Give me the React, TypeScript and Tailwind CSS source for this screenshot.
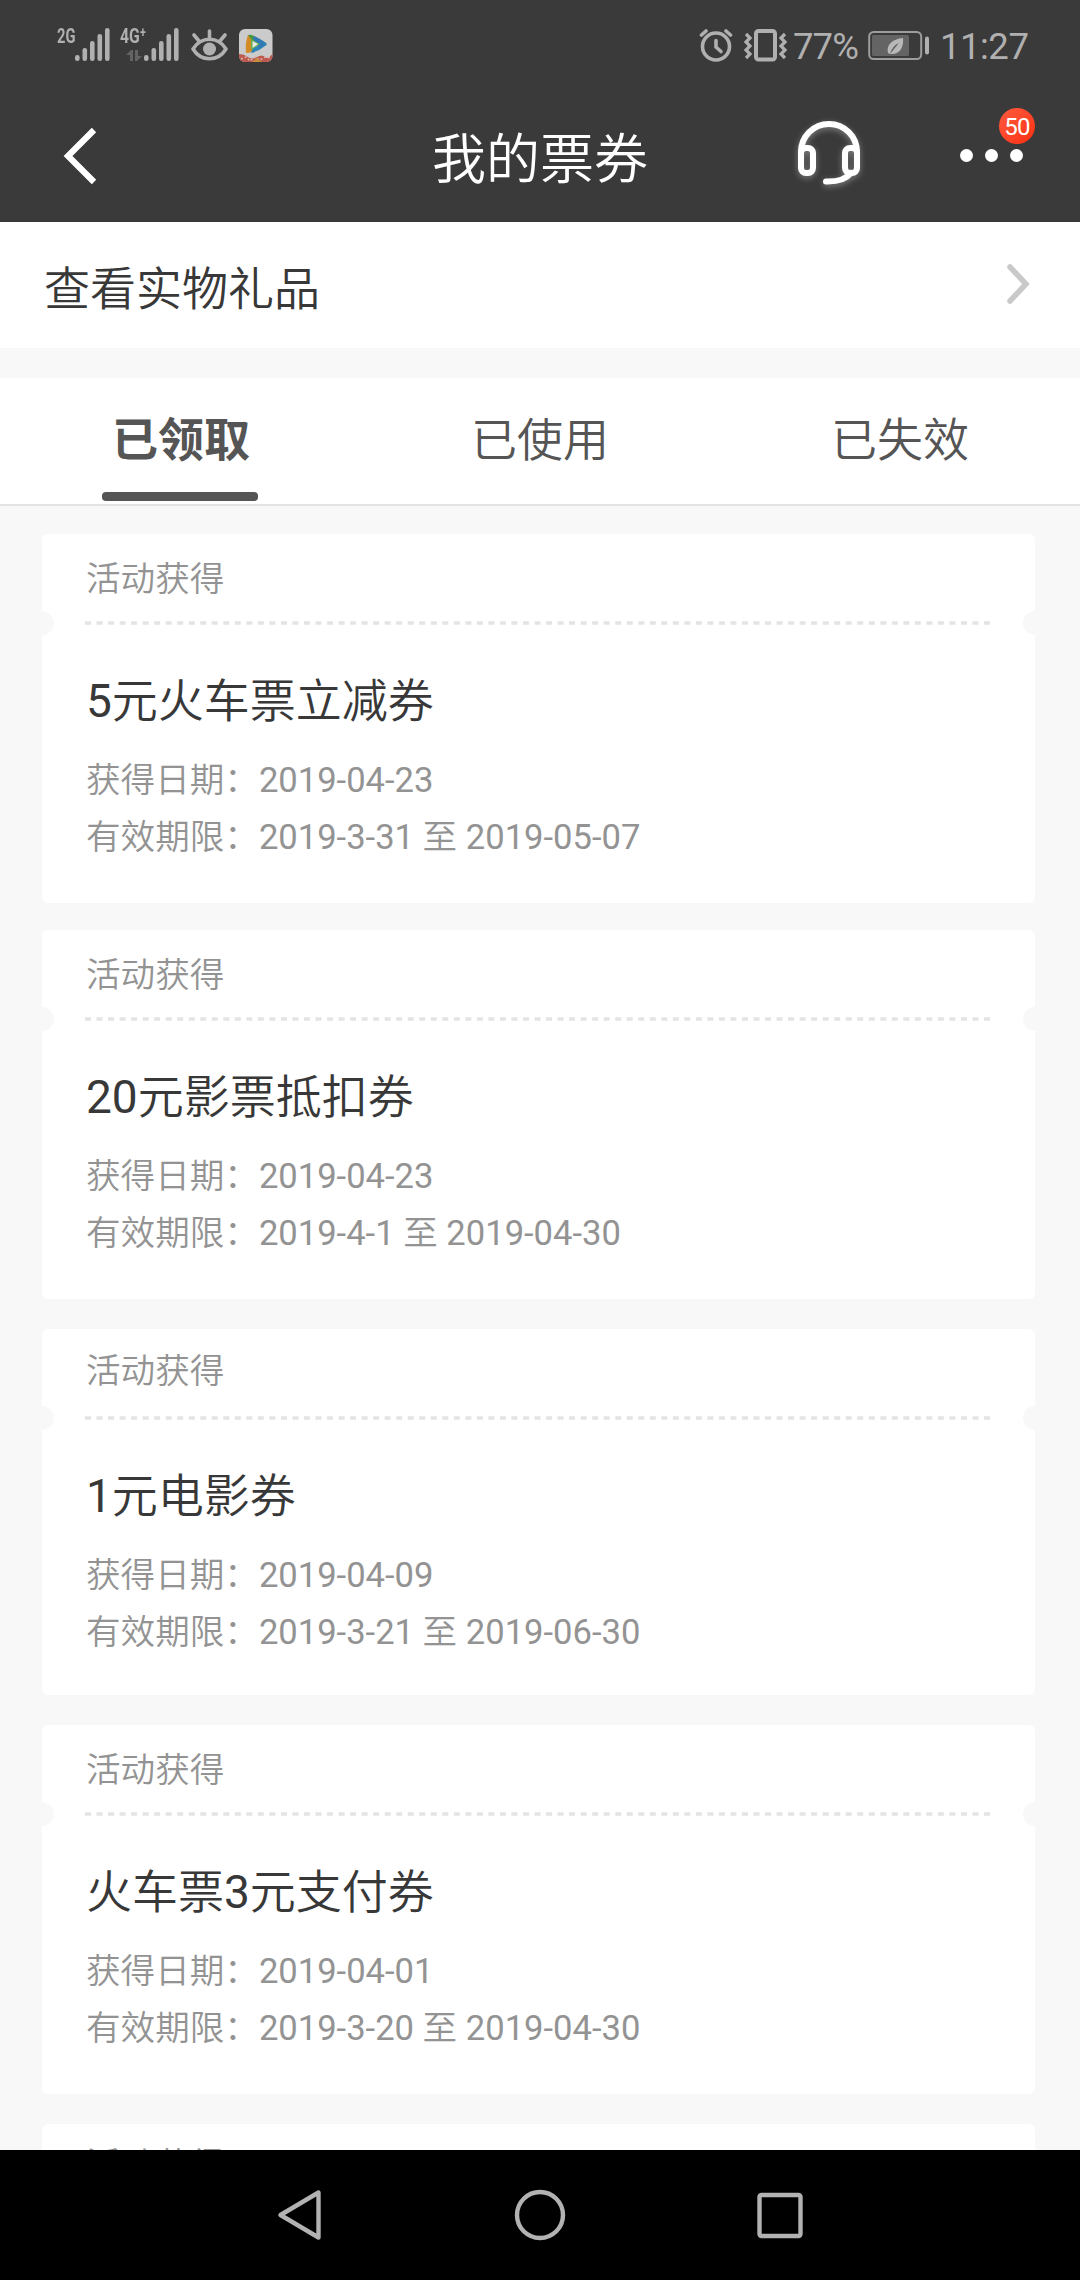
import clsx from 'clsx';

const bars = [
  { x: 0, h: 6 },
  { x: 7.5, h: 13 },
  { x: 15, h: 20 },
  { x: 22.5, h: 27 },
  { x: 30, h: 33 },
];

const tabs = [
  { label: '已领取', active: true },
  { label: '已使用', active: false },
  { label: '已失效', active: false },
];

type CouponData = {
  title?: string;
  date?: string;
  range?: string;
  className: string;
  labelClassName: string;
};

const coupons: CouponData[] = [
  {
    title: '5元火车票立减券',
    date: '2019-04-23',
    range: '2019-3-31 至 2019-05-07',
    className: 'h-[369px]',
    labelClassName: 'pt-[4px]',
  },
  {
    title: '20元影票抵扣券',
    date: '2019-04-23',
    range: '2019-4-1 至 2019-04-30',
    className: 'mt-[27px] h-[369px]',
    labelClassName: 'pt-[4px]',
  },
  {
    title: '1元电影券',
    date: '2019-04-09',
    range: '2019-3-21 至 2019-06-30',
    className: 'mt-[30px] h-[366px]',
    labelClassName: 'pb-[2px]',
  },
  {
    title: '火车票3元支付券',
    date: '2019-04-01',
    range: '2019-3-20 至 2019-04-30',
    className: 'mt-[30px] h-[369px]',
    labelClassName: 'pt-[4px]',
  },
  // next card, only its top edge is on screen
  { className: 'mt-[30px] h-[369px]', labelClassName: 'pb-[3px]' },
];

function SignalBars() {
  return (
    <svg width="35" height="33" viewBox="0 0 35 33" fill="#b0b0b0">
      {bars.map((bar) => (
        <rect key={bar.x} x={bar.x} y={33 - bar.h} width="4.6" height={bar.h} rx="2.2" />
      ))}
    </svg>
  );
}

function StatusBar() {
  return (
    <div className="flex h-[90px] items-start pt-7 pl-[57px] text-[#b0b0b0]">
      <span className="-mt-[2px] w-[18px] origin-left scale-x-[0.7] text-[21px] leading-[20px] font-bold">2G</span>
      <SignalBars />
      <div className="ml-[10px] flex h-[33px] w-[24px] flex-col">
        <span className="-mt-[2px] origin-left scale-x-[0.75] text-[21px] leading-[20px] font-bold">4G⁺</span>
        <svg className="mt-1 ml-[6px] shrink-0" width="16" height="12" viewBox="0 0 16 12" fill="#636363">
          <path d="M0 5 5 0h2v11H4V5zM9 0h3v6h4l-5 5H9z" />
        </svg>
      </div>
      <SignalBars />
      <svg className="mt-[1px] ml-3" width="37" height="34" viewBox="0 0 37 34" fill="none" stroke="#b0b0b0" strokeWidth="3.6" strokeLinecap="round">
        <path d="M2 20C10 7 27 7 35 20 27 33 10 33 2 20Z" strokeLinejoin="round" />
        <path d="M18.500 9V2M8 12 3 6M29 12l5-6" />
        <circle cx="18.500" cy="20" r="6.500" fill="#b0b0b0" stroke="none" />
      </svg>
      <svg className="mt-[1px] ml-[11px]" width="34" height="34" viewBox="0 0 34 34">
        <defs>
          <clipPath id="app-tile">
            <rect width="33.500" height="33" rx="6" />
          </clipPath>
        </defs>
        <g clipPath="url(#app-tile)">
          <rect width="34" height="34" fill="#cbcbcb" />
          <path d="M0 25q5 0 9 3t9 0 8 0 8-4v10H0z" fill="#bd5a50" />
          <path d="M2 30l5-2 4 4 5-4 5 3 5-3 6 1" fill="none" stroke="#dcb0a8" strokeWidth="1.500" strokeDasharray="2 2" />
          <path d="M13 33l5-4 5 4" fill="#c88d3f" />
          <path d="M9 6q-3 8-2 18 4 0 7-2l-1-13z" fill="#d38b25" />
          <path d="M9 6q3-1 6 1l12 7-13-1z" fill="#4a9a3c" />
          <path d="M27 14q2 2-1 3-6 5-14 7l2-5z" fill="#2c86b6" />
          <path d="M15 7q7 3 12 7-2 3-7 5l-6-9z" fill="#2f79b5" />
          <path d="M12 10l9 5-9 6z" fill="#63ad4b" />
          <path d="M13.500 12l5.500 3-5.500 4z" fill="#e8e8e8" />
        </g>
      </svg>

      <svg className="ml-[426px]" width="34" height="35" viewBox="0 0 34 35" fill="none" stroke="#b0b0b0" strokeWidth="3.600" strokeLinecap="round">
        <circle cx="17" cy="18.500" r="13.500" />
        <path d="M17 12.500v6.500l5 4.500" />
        <path d="M2.500 7 7 3M31.500 7 27 3" />
      </svg>
      <svg className="ml-[11px]" width="44" height="35" viewBox="0 0 44 35" fill="none" stroke="#b0b0b0">
        <rect x="12" y="3" width="19" height="28.500" rx="2.500" strokeWidth="4" />
        <path d="M2 6l4 4-4 4 4 4-4 4 4 4-4 4M41 6l-4 4 4 4-4 4 4 4-4 4 4 4" strokeWidth="3.200" />
      </svg>
      <span className="mt-[1px] ml-[5px] w-[66px] text-[36.5px] leading-[36px] tracking-[-0.9px]">77%</span>
      <svg className="mt-[3px] ml-[9px]" width="62" height="30" viewBox="0 0 62 30">
        <rect x="1.200" y="1" width="52" height="27" rx="4.500" fill="none" stroke="#9d9d9d" strokeWidth="2" />
        <rect x="4" y="4" width="37" height="21" rx="1.500" fill="#646464" />
        <path d="M20 22c-2-8 4-14 15-15 1 9-3 17-13 16l9-11q-7 3-9 11z" fill="#b8b8b8" />
        <rect x="57" y="5.500" width="4" height="18" rx="2" fill="#b0b0b0" />
      </svg>
      <span className="mt-[1px] ml-[10px] text-[36.5px] leading-[36px] tracking-[-0.5px]">11:27</span>
    </div>
  );
}

function Header() {
  return (
    <header className="flex h-[132px] items-center text-white">
      <svg className="-mt-px ml-[62px]" width="36" height="58" viewBox="0 0 36 58" fill="none" stroke="currentColor" strokeWidth="6.200">
        <path d="M32 3 6 29l26 26" />
      </svg>
      <h1 className="ml-[334px] w-[216px] pt-[10px] text-[54px] leading-[60px] font-normal whitespace-nowrap">我的票券</h1>
      <svg className="ml-[147px] drop-shadow-[0_2px_3px_rgba(255,255,255,0.35)]" width="70" height="70" viewBox="0 0 70 70" fill="none" stroke="currentColor" strokeWidth="6" strokeLinecap="round">
        <path d="M6 31a28 28 0 0 1 56 0" />
        <rect x="6" y="27" width="12" height="25" rx="5" />
        <rect x="50" y="27" width="12" height="25" rx="5" />
        <path d="M56 52q-7 9-25 8.500" />
      </svg>
      <div className="relative -mt-px ml-[95px] flex gap-3">
        <i className="size-[13px] rounded-full bg-white" />
        <i className="size-[13px] rounded-full bg-white" />
        <i className="size-[13px] rounded-full bg-white" />
        <span className="absolute -top-[41px] left-[39px] flex size-9 items-center justify-center rounded-full bg-linear-to-br from-[#ff5a3c] to-[#fb2c0c] pt-[2px] text-[24px] leading-none tracking-[-0.8px]">
          50
        </span>
      </div>
    </header>
  );
}

function Coupon({ title, date, range, className, labelClassName }: CouponData) {
  return (
    <article
      className={clsx(
        'relative shrink-0 overflow-hidden rounded-md bg-white px-11 text-[34.6px] text-[#939393]',
        className
      )}
    >
      <span className="absolute top-[77px] -left-[12px] size-6 rounded-full bg-[#f8f8f8]" />
      <span className="absolute top-[77px] -right-[12px] size-6 rounded-full bg-[#f8f8f8]" />
      <p className={clsx('flex h-[87px] items-center', labelClassName)}>活动获得</p>
      <svg className="-ml-px block" width="905" height="4" viewBox="0 0 905 4">
        <path d="M0 2h905" stroke="#e4e4e4" strokeWidth="3.400" strokeDasharray="6 5.526" />
      </svg>
      {title && (
        <>
          <h2 className="mt-[46px] text-[46px] leading-[60px] font-normal text-[#383838]">{title}</h2>
          <p className="mt-[21px] leading-[57px]">获得日期：{date}</p>
          <p className="leading-[57px]">有效期限：{range}</p>
        </>
      )}
    </article>
  );
}

function NavBar() {
  return (
    <nav className="flex h-[130px] shrink-0 items-center bg-black">
      <svg className="ml-[276px]" width="528" height="54" viewBox="0 0 528 54" fill="none" stroke="#b2b2b2" strokeWidth="4.400" strokeLinejoin="round">
        <path d="M42.500 4.500v45L4.500 27z" />
        <circle cx="264" cy="27" r="23" />
        <rect x="483.500" y="7" width="41" height="41" rx="2" />
      </svg>
    </nav>
  );
}

export default function App() {
  return (
    <div className="flex h-[2280px] w-[1080px] flex-col overflow-hidden bg-[#f8f8f8] font-['Roboto','Noto_Sans_CJK_SC_DemiLight','Noto_Sans_CJK_SC',sans-serif]">
      <div className="h-[222px] shrink-0 bg-[#3a3a3a]">
        <StatusBar />
        <Header />
      </div>

      <div className="flex h-[126px] shrink-0 items-center justify-between bg-white pr-[50px] pl-[44px]">
        <span className="pt-[7px] text-[46px] leading-[60px] text-[#383838]">查看实物礼品</span>
        <svg className="-mt-[2px]" width="24" height="40" viewBox="0 0 24 40" fill="none" stroke="#c9c9c9" strokeWidth="5.500" strokeLinecap="round">
          <path d="M4 3l16 17L4 37" />
        </svg>
      </div>

      <div className="mt-[30px] grid h-[128px] shrink-0 grid-cols-3 border-b-2 border-[#e4e4e4] bg-white text-[46px] text-[#555]">
        {tabs.map((tab) => (
          <div key={tab.label} className="flex flex-col items-center">
            <span
              className={clsx(
                'mt-8 h-[82px] leading-[60px]',
                tab.active && "pl-[2px] font-['Roboto','Noto_Sans_CJK_SC',sans-serif] font-bold"
              )}
            >
              {tab.label}
            </span>
            {tab.active && <i className="h-[9px] w-[156px] rounded-[4px] bg-[#555]" />}
          </div>
        ))}
      </div>

      <main className="flex min-h-0 flex-1 flex-col overflow-hidden pt-7 pr-[45px] pl-[42px]">
        {coupons.map((coupon, i) => (
          <Coupon key={i} {...coupon} />
        ))}
      </main>

      <NavBar />
    </div>
  );
}
